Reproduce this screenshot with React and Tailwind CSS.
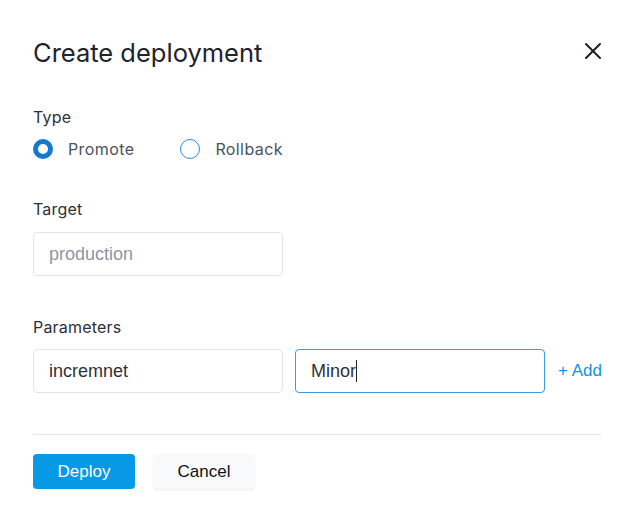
import { X } from 'lucide-react'

const inter = { fontFamily: 'Inter, "Noto Sans", sans-serif' }

function Radio({ checked, label }) {
  return (
    <label className="flex items-center gap-[15px]">
      {checked ? (
        <span className="w-5 h-5 rounded-full border-[5px] border-[#1477d0] bg-white" />
      ) : (
        <span className="w-5 h-5 rounded-full border-[1.5px] border-[#2a8be0] bg-white" />
      )}
      <span className="text-[16px] leading-5 text-[#4a5261] tracking-[0.4px]">{label}</span>
    </label>
  )
}

function Field({ children, active }) {
  return (
    <div
      className={
        'shrink-0 w-[250px] h-[44px] rounded-[4px] border flex items-center px-[15px] text-[18px] font-["Liberation_Sans",Arial,sans-serif] ' +
        (active ? 'border-[#3a9ae6]' : 'border-[#e3e5ea]')
      }
    >
      {children}
    </div>
  )
}

function App() {
  return (
    <div className="w-[638px] h-[526px] bg-white pl-[33px] pr-[37px] text-[#22262e]" style={inter}>
      <div className="flex items-center justify-between pt-[37px]">
        <h1 className="text-[25.5px] leading-[32px] font-normal text-[#1f232b]">Create deployment</h1>
        <X size={28} strokeWidth={1.75} className="text-[#1f232b] mr-[-6px] mt-[-5px]" />
      </div>

      <div className="mt-[38px] text-[16px] leading-5 tracking-[0.2px] text-[#2b303a]">Type</div>
      <div className="mt-3 flex items-center gap-[46px]">
        <Radio checked label="Promote" />
        <Radio label="Rollback" />
      </div>

      <div className="mt-[40px] text-[16px] leading-5 tracking-[0.2px] text-[#2b303a]">Target</div>
      <div className="mt-[13px]">
        <Field>
          <span className="text-[#8d95a5]">production</span>
        </Field>
      </div>

      <div className="mt-[41px] text-[16px] leading-5 tracking-[0.2px] text-[#2b303a]">Parameters</div>
      <div className="mt-[12px] flex items-center gap-3">
        <Field>
          <span className="text-[#2e323a]">incremnet</span>
        </Field>
        <Field active>
          <span className="text-[#2e323a]">Minor</span>
          <span className="w-px h-[22px] bg-[#222]" />
        </Field>
        <button className='ml-px whitespace-nowrap text-[17px] text-[#1592e6] font-["Liberation_Sans",Arial,sans-serif]'>+ Add</button>
      </div>

      <div className="mt-[41px] h-px bg-[#e4e6ea]" />

      <div className='mt-[19px] flex items-center gap-[18px] font-["Liberation_Sans",Arial,sans-serif] text-[17px]'>
        <button className="w-[102px] h-[35px] rounded-[4px] bg-[#0798e6] text-white">Deploy</button>
        <button className="w-[102px] h-[35px] rounded-[4px] bg-[#f8f9fb] text-[#111] shadow-[0_1px_2px_rgba(0,0,0,0.08)]">
          Cancel
        </button>
      </div>
    </div>
  )
}

export default App
